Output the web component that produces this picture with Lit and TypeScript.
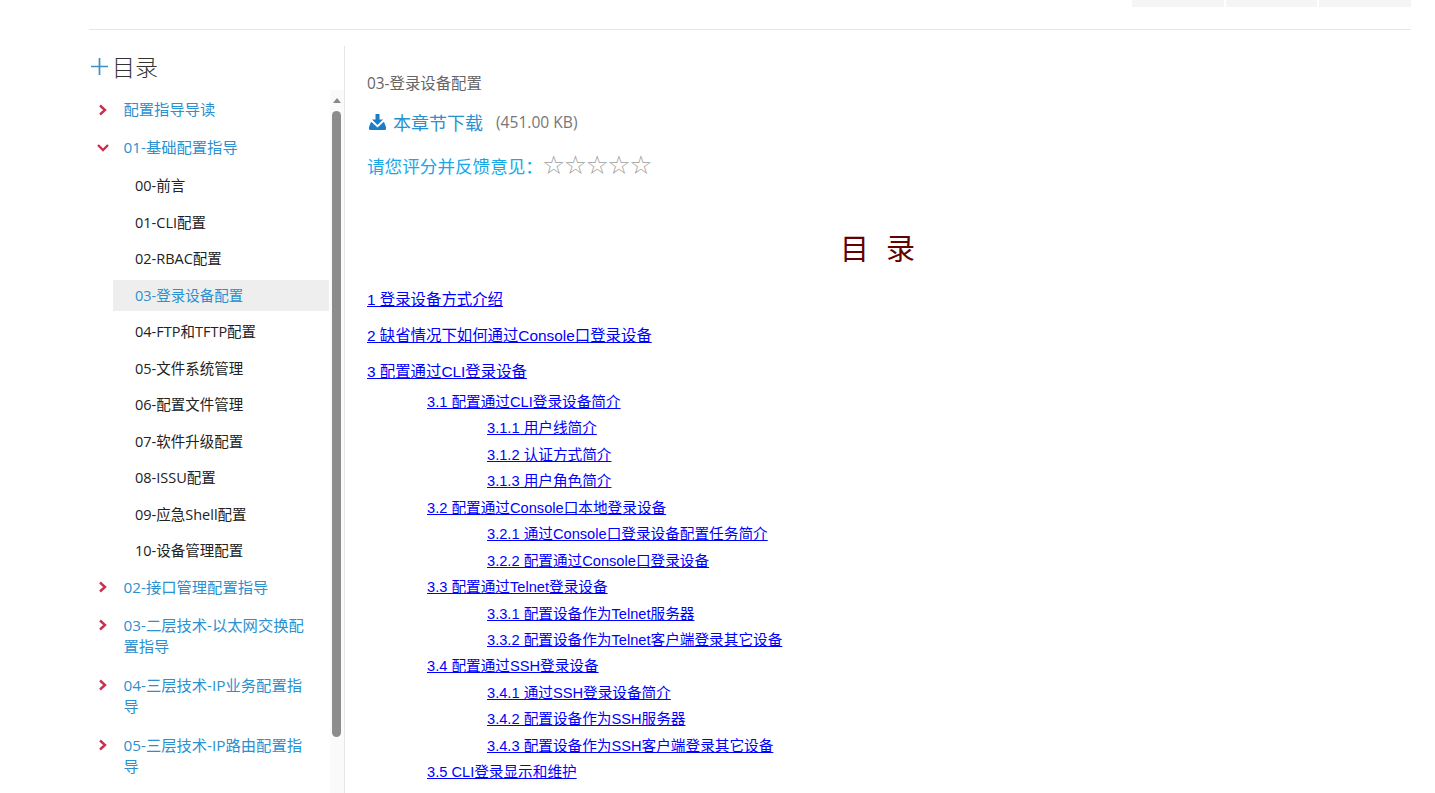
import { LitElement, html, css } from "lit";
import { customElement } from "lit/decorators.js";

const chevR = html`<svg class="chev" viewBox="0 0 10 12" width="10" height="12"><path d="M2 1.5 L7 6 L2 10.5" fill="none" stroke="#c9304f" stroke-width="2.4"/></svg>`;
const chevD = html`<svg class="chev" viewBox="0 0 12 10" width="12" height="10"><path d="M1 2 L6 7 L11 2" fill="none" stroke="#c9304f" stroke-width="2.4"/></svg>`;

const subs = ["00-前言","01-CLI配置","02-RBAC配置","03-登录设备配置","04-FTP和TFTP配置","05-文件系统管理","06-配置文件管理","07-软件升级配置","08-ISSU配置","09-应急Shell配置","10-设备管理配置"];
const after = ["02-接口管理配置指导","03-二层技术-以太网交换配置指导","04-三层技术-IP业务配置指导","05-三层技术-IP路由配置指导"];
const l2: [number, string][] = [
  [1,"3.1 配置通过CLI登录设备简介"],[2,"3.1.1 用户线简介"],[2,"3.1.2 认证方式简介"],[2,"3.1.3 用户角色简介"],
  [1,"3.2 配置通过Console口本地登录设备"],[2,"3.2.1 通过Console口登录设备配置任务简介"],[2,"3.2.2 配置通过Console口登录设备"],
  [1,"3.3 配置通过Telnet登录设备"],[2,"3.3.1 配置设备作为Telnet服务器"],[2,"3.3.2 配置设备作为Telnet客户端登录其它设备"],
  [1,"3.4 配置通过SSH登录设备"],[2,"3.4.1 通过SSH登录设备简介"],[2,"3.4.2 配置设备作为SSH服务器"],[2,"3.4.3 配置设备作为SSH客户端登录其它设备"],
  [1,"3.5 CLI登录显示和维护"],
];

@customElement("app-root")
export class AppRoot extends LitElement {
  static styles = css`
    :host { display: block; height: 793px; overflow: hidden; background: #fff; font-family: "Open Sans", "Noto Sans CJK SC", sans-serif; }
    .wrap { margin: 0 24px 0 89px; }
    .top { height: 29px; border-bottom: 1px solid #e6e6e6; display: flex; justify-content: flex-end; gap: 2px; }
    .btn { width: 91.7px; height: 7px; background: #f5f5f5; }
    .main { display: flex; margin-top: 16px; }
    .side { width: 256px; height: 750px; border-right: 1px solid #e6e6e6; flex: none; display: flex; flex-direction: column; box-sizing: border-box; }
    .head { height: 44px; display: flex; align-items: center; color: #333; font-size: 23px; font-weight: 300; padding-left: 2px; gap: 4px; flex: none; position: relative; top: -2px; }
    .body { display: flex; flex: 1; min-height: 0; }
    .list { width: 241px; flex: none; padding-top: 1px; }
    .bar { width: 14px; background: #fafafa; flex: none; }
    .arrow { width: 0; height: 0; border: 4.5px solid transparent; border-bottom: 5px solid #888; border-top: 0; margin: 8px auto 0; }
    .thumb { width: 9px; height: 626px; background: #8c8c8c; border-radius: 5px; margin: 8px auto 0 2px; }
    .item { display: flex; color: #2a90d0; font-size: 15.3px; line-height: 21.5px; padding: 8px 26px 8.5px 0; }
    .item.two { padding-bottom: 9px; }
    .ic { width: 34.5px; flex: none; display: flex; justify-content: center; height: 21.5px; align-items: center; padding-right: 7px; box-sizing: border-box; }
    .chev { display: block; }
    .sub { color: #222; font-size: 14.5px; line-height: 21px; padding: 5px 0 5px 22px; margin: 0 0 5.5px 24px; width: 216px; box-sizing: border-box; }
    .sub.on { background: #eee; color: #2a90d0; }
    .subs { padding-top: 3px; margin-bottom: -3px; }
    .content { flex: 1; padding: 26px 0 0 22px; min-width: 0; }
    .crumb { color: #666; font-size: 15.4px; line-height: 24px; }
    .dl { display: flex; align-items: center; margin-top: 13px; height: 26px; color: #2a90d0; font-size: 18px; }
    .dl svg { margin: 0 7px 0 2px; }
    .size { color: #777; font-size: 15.6px; margin-left: 13px; }
    .rate { display: flex; align-items: center; color: #1aa7e8; font-size: 17.6px; margin-top: 16px; height: 28px; }
    .stars { color: #a0a0a0; font-size: 26px; font-family: "DejaVu Sans", sans-serif; display: flex; margin-left: -1px; }
    .stars span { width: 21.8px; text-align: center; }
    h1 { margin: 49px 0 0; display: flex; justify-content: center; gap: 17px; color: #660000; font-weight: normal; font-size: 29px; line-height: 42px; padding-right: 23px; }
    .toc { font-family: "Liberation Sans", "Noto Sans CJK SC", sans-serif; font-size: 14.65px; margin-top: 18px; }
    .toc a { color: #00f; text-decoration: underline; }
    .t0 { line-height: 24px; margin-bottom: 12px; font-size: 15.4px; }
    .t1, .t2 { line-height: 24px; margin-bottom: 2.45px; }
    .t1 { padding-left: 60px; }
    .t2 { padding-left: 120px; }
    .t0.last { margin-bottom: 6px; }
  `;
  render() {
    return html`<div class="wrap">
      <div class="top"><div class="btn"></div><div class="btn"></div><div class="btn"></div></div>
      <div class="main">
        <aside class="side">
          <div class="head"><svg width="17" height="17" viewBox="0 0 18 18"><path d="M9 0V18M0 9H18" stroke="#3d8fc4" stroke-width="1.8" fill="none"/></svg><span>目录</span></div>
          <div class="body">
            <div class="list">
              <div class="item"><span class="ic">${chevR}</span><span>配置指导导读</span></div>
              <div class="item"><span class="ic">${chevD}</span><span>01-基础配置指导</span></div>
              <div class="subs">${subs.map((s, i) => html`<div class="sub ${i === 3 ? "on" : ""}">${s}</div>`)}</div>
              ${after.map((s, i) => html`<div class="item ${i > 0 ? "two" : ""}"><span class="ic">${chevR}</span><span>${s}</span></div>`)}
            </div>
            <div class="bar"><div class="arrow"></div><div class="thumb"></div></div>
          </div>
        </aside>
        <main class="content">
          <div class="crumb">03-登录设备配置</div>
          <div class="dl">
            <svg width="17" height="16" viewBox="0 0 17 16"><path d="M6.5 0h4v5.5H14L8.5 11 3 5.5h3.5z M2.5 8l6 5.5 6-5.5h.5l2 5v2a1 1 0 0 1-1 1H1a1 1 0 0 1-1-1v-2l2-5z" fill="#1a7fc8"/></svg>
            <span>本章节下载</span><span class="size">(451.00 KB)</span>
          </div>
          <div class="rate"><span>请您评分并反馈意见：</span><span class="stars"><span>☆</span><span>☆</span><span>☆</span><span>☆</span><span>☆</span></span></div>
          <h1><span>目</span><span>录</span></h1>
          <div class="toc">
            <div class="t0"><a>1 登录设备方式介绍</a></div>
            <div class="t0"><a>2 缺省情况下如何通过Console口登录设备</a></div>
            <div class="t0 last"><a>3 配置通过CLI登录设备</a></div>
            ${l2.map(([lv, t]) => html`<div class="t${lv}"><a>${t}</a></div>`)}
          </div>
        </main>
      </div>
    </div>`;
  }
}
